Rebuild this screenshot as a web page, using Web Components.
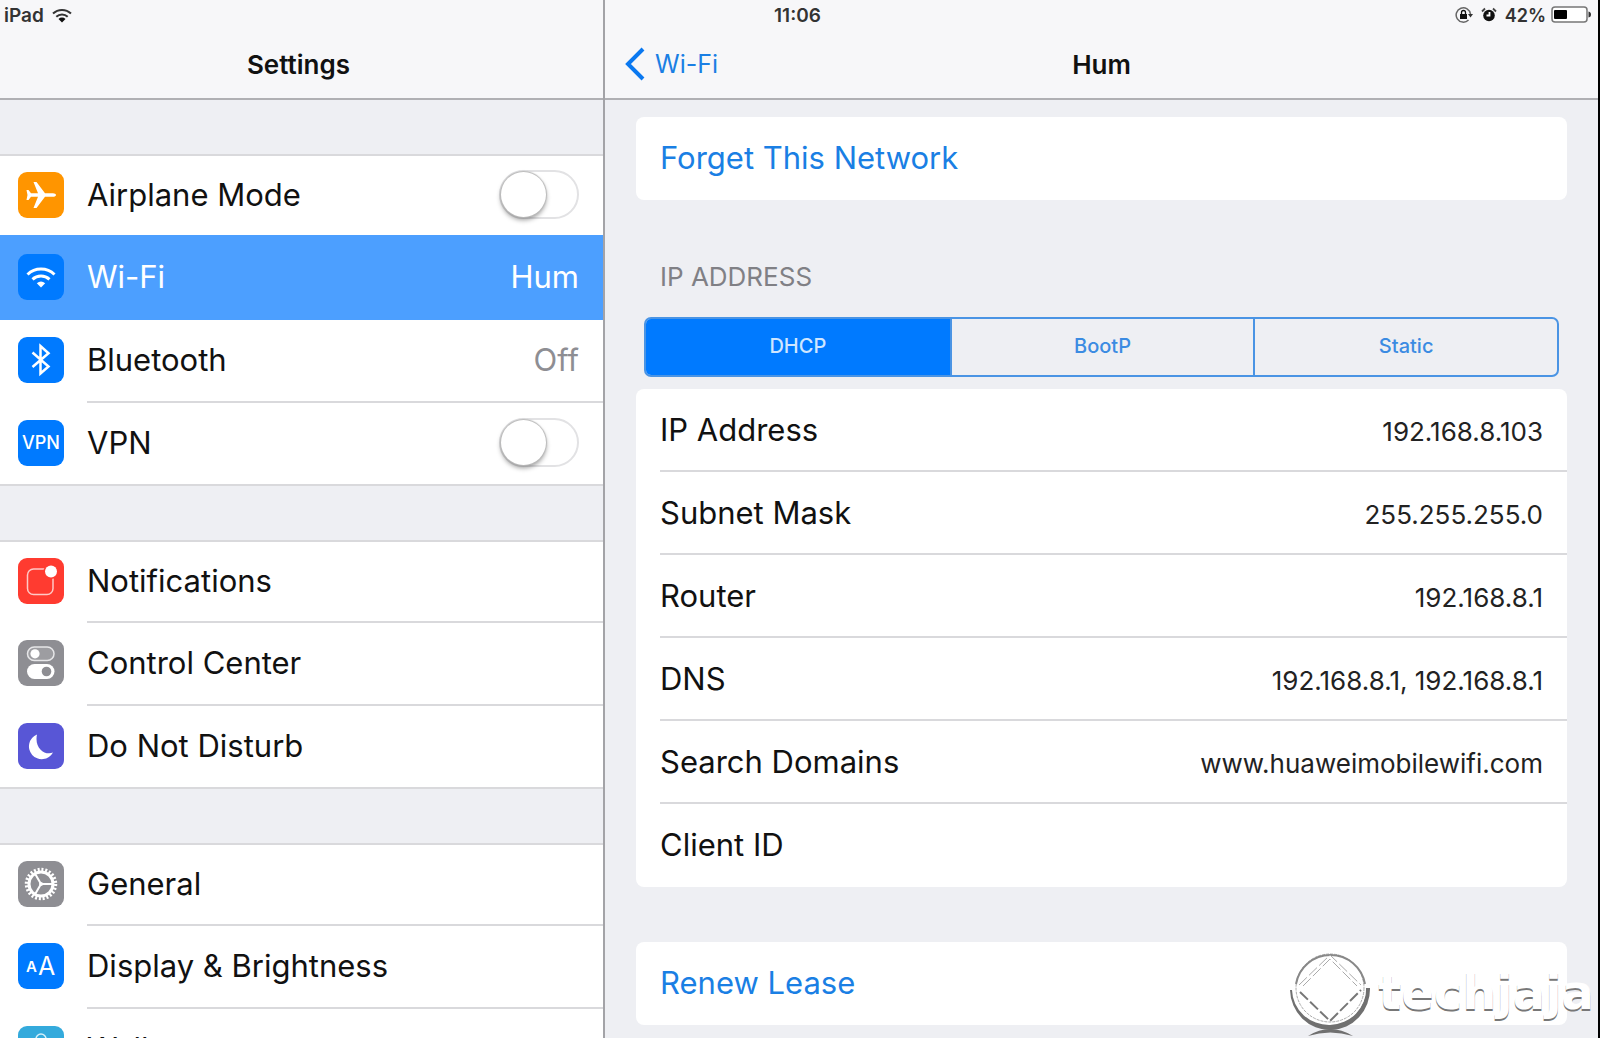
<!DOCTYPE html>
<html lang="en">
<head>
<meta charset="utf-8">
<meta name="viewport" content="width=device-width, initial-scale=1">
<title>Settings</title>
<style>
    body {
        margin: 0;
        font-family: Inter, "Liberation Sans", sans-serif;
        color: #111;
        --pane: #eeeff3;
        --bar: #f7f7f9;
        --edge: #b0b0b4;
        --line: #d9d9dc;
        --blue: #007aff;
        --link: #1a7fe4;
    }
</style>
</head>
<body>
<settings-app></settings-app>

<script>
const makeTemplate = (html) => {
    const template = document.createElement('template');
    template.innerHTML = html;
    return template;
}

const attach = (element, template) => {
    const root = element.attachShadow({ mode: "open" });
    root.appendChild(template.content.cloneNode(true));
    return root;
}

// 46x46 tiles: background colour and the white glyph on it
const tiles = {
    airplane: ['#ff9500', `<path fill="#fff" d="M38 23c0 1-1.500 1.800-3 1.800H27L18.500 36H15.500L20 24.800H13L10.500 28H8.500L9.500 23 8.500 18H10.500L13 21.200H20L15.500 10H18.500L27 21.200H35c1.500 0 3 .8 3 1.800z"/>`],
    wifi: ['#007aff', `<g fill="none" stroke="#fff" stroke-width="3"><path d="M9.500 20.500a19.500 19.500 0 0 1 27 0"/><path d="M14.500 25.300a12.500 12.500 0 0 1 17 0"/></g><path fill="#fff" d="M18.800 29.200a6.500 6.500 0 0 1 8.400 0L23 33.500z"/>`],
    bluetooth: ['#007aff', `<path fill="none" stroke="#fff" stroke-width="2.500" d="M14.500 15.500L30.500 29.500 22.500 36.500V9L30.500 16.200 14.500 30"/>`],
    vpn: ['#007aff', `<text x="23" y="29" font-size="18" font-weight="500" text-anchor="middle" fill="#fff">VPN</text>`],
    notifications: ['#ff3b30', `<rect x="9.500" y="11" width="25.500" height="25.500" rx="6" fill="none" stroke="#ffc9c5" stroke-width="1.500"/><circle cx="33" cy="13.500" r="7.500" fill="#ff3b30"/><circle cx="33" cy="13.500" r="6" fill="#fff"/>`],
    control: ['#8e8e93', `<rect x="9.500" y="7" width="26.500" height="13.500" rx="6.700" fill="#9d9da1" stroke="#e6e6e8" stroke-width="1.500"/><circle cx="17" cy="13.800" r="4.600" fill="#fff"/><rect x="9" y="24" width="27.500" height="15" rx="7.500" fill="#fff"/><circle cx="28.500" cy="31.500" r="4.800" fill="#8e8e93"/>`],
    moon: ['#5856d6', `<path fill="#fff" d="M19 11.500A12.800 12.800 0 1 0 35 29.500C27 33 16 25 19 11.500z"/>`],
    gear: ['#8e8e93', `<g fill="none" stroke="#fff"><circle cx="23" cy="23" r="12" stroke-width="3"/><circle cx="23" cy="23" r="14.500" stroke-width="3.500" stroke-dasharray="2 1.796"/><path stroke-width="2" d="M23 23H34M23 23L17.500 13.500M23 23L17.500 32.500"/></g><circle cx="23" cy="23" r="2" fill="#fff"/>`],
    display: ['#007aff', `<text x="8" y="29" font-size="15" font-weight="600" fill="#fff">A</text><text x="20" y="32" font-size="25" fill="#fff">A</text>`],
    wallpaper: ['#34aadc', `<g fill="none" stroke="#d5f0fa" stroke-width="1.500"><circle cx="23" cy="13" r="5"/><circle cx="13.500" cy="19" r="5"/><circle cx="32.500" cy="19" r="5"/><circle cx="23" cy="33" r="5"/><circle cx="23" cy="23" r="5"/></g>`],
};

class AppIcon extends HTMLElement {
    constructor() {
        super();
        const [color, glyph] = tiles[this.getAttribute('name')];
        attach(this, makeTemplate(`
        <style>
        :host { display: block; flex: none; width: 46px; height: 46px; }
        svg { display: block; font-family: inherit; }
        </style>
        <svg width="46" height="46" viewBox="0 0 46 46" aria-hidden="true">
            <rect width="46" height="46" rx="9" fill="${color}"/>${glyph}
        </svg>`));
    }
}

class SettingsRow extends HTMLElement {
    constructor() {
        super();
        const label = this.getAttribute('label');
        const icon = this.getAttribute('icon');
        const value = this.getAttribute('value') || '';
        const inner = `<span class="name">${label}</span>`;
        const row = this.hasAttribute('switch')
            ? `<label class="row"><app-icon name="${icon}"></app-icon><span class="body">${inner}<input type="checkbox" role="switch"></span></label>`
            : `<a class="row" href="#${icon}"><app-icon name="${icon}"></app-icon><span class="body">${inner}<span class="value">${value}</span></span></a>`;
        attach(this, makeTemplate(`
        <style>
        :host { display: block; height: 83px; }
        :host(:first-child) { height: 81px; }
        .row {
            display: flex;
            height: 100%;
            gap: 23px;
            padding-left: 18px;
            align-items: center;
            color: inherit;
            text-decoration: none;
            font-size: 31px;
            box-sizing: border-box;
        }
        app-icon { margin-bottom: 4px; }
        .body {
            flex: 1;
            display: flex;
            height: 100%;
            align-items: center;
            justify-content: space-between;
            padding: 0 24px 2px 0;
            border-bottom: 2px solid var(--line);
            box-sizing: border-box;
        }
        :host(:last-child) .body { border-color: transparent; }
        .value { color: #8e8e93; }
        :host([selected]) {
            position: relative;
            background: #4c9fff;
            color: #fff;
            box-shadow: 0 -2px #4c9fff;
        }
        :host([selected]) .body { border-color: transparent; }
        :host([selected]) .value { color: #fff; }
        input {
            appearance: none;
            margin: 0;
            width: 80px;
            height: 49px;
            border: 2px solid #e2e2e4;
            border-radius: 25px;
            background: #fff;
        }
        input::before {
            content: "";
            display: block;
            width: 45px;
            height: 45px;
            border-radius: 50%;
            background: #fff;
            box-shadow: 0 0 1px 1px #bbb, 0 3px 5px rgba(0, 0, 0, .4);
        }
        input:checked { background: #4cd964; }
        input:checked::before { margin-left: auto; }
        </style>
        ${row}`));
    }
}

const listTemplate = makeTemplate(`
<style>
:host {
    display: block;
    margin-top: 54px;
    background: #fff;
    border-top: 2px solid var(--line);
    box-shadow: inset 0 -2px var(--line);
}
</style>
<slot></slot>`);

class SettingsList extends HTMLElement {
    constructor() {
        super();
        attach(this, listTemplate);
    }
}

const navTemplate = makeTemplate(`
<style>
:host {
    display: grid;
    grid-template-columns: 1fr auto 1fr;
    align-items: center;
    flex: none;
    height: 100px;
    padding: 30px 20px 0;
    background: var(--bar);
    border-bottom: 2px solid var(--edge);
    box-sizing: border-box;
    font-size: 25px;
}
h1 { grid-column: 2; margin: 0; font-size: 26px; font-weight: 600; }
::slotted(a) {
    grid-row: 1;
    display: flex;
    align-items: center;
    gap: 10px;
    color: var(--link);
    text-decoration: none;
}
</style>
<slot name="back"></slot>
<h1><slot></slot></h1>`);

class NavBar extends HTMLElement {
    constructor() {
        super();
        attach(this, navTemplate);
    }
}

const statusTemplate = makeTemplate(`
<style>
:host {
    display: grid;
    grid-template-columns: 1fr auto 1fr;
    align-items: center;
    height: 30px;
    padding: 0 7px 0 4px;
    font-size: 19px;
    font-weight: 600;
    color: #333;
}
div { display: flex; align-items: center; gap: 8px; }
.right { justify-content: flex-end; font-size: 18px; }
.power { gap: 5px; }
svg { display: block; }
</style>
<div>
    <span>iPad</span>
    <svg width="20" height="15" viewBox="0 0 20 15" fill="none" stroke="#333" stroke-width="2">
        <path d="M1 5.500a13 13 0 0 1 18 0M4.300 8.800a8.200 8.200 0 0 1 11.400 0"/>
        <path fill="#111" stroke="none" d="M6.500 11a5 5 0 0 1 7 0L10 14.500z"/>
    </svg>
</div>
<time>11:06</time>
<div class="right">
    <svg width="18" height="18" viewBox="0 0 18 18">
        <path fill="none" stroke="#666" stroke-width="1.500" d="M15.500 8A7.200 7.200 0 1 0 13.500 14"/>
        <path fill="#333" d="M13 8H18L15.500 11.500z"/>
        <rect x="5" y="8" width="7" height="5" fill="#111"/>
        <path fill="none" stroke="#111" stroke-width="1.300" d="M6.500 8V6.500a2 2 0 0 1 4 0V8"/>
    </svg>
    <svg width="16" height="16" viewBox="0 0 16 16">
        <circle cx="8" cy="8.500" r="5.800" fill="#111"/>
        <path stroke="#fff" stroke-width="1.800" fill="none" d="M8.500 5V8.500H5.500"/>
        <path stroke="#444" stroke-width="1.800" fill="none" d="M1 4.500L4 1.500M15 4.500L12 1.500"/>
    </svg>
    <div class="power">
        <span>42%</span>
        <svg width="40" height="18" viewBox="0 0 40 18">
            <rect x="1" y="1" width="35" height="15" rx="3" fill="#fff" stroke="#777" stroke-width="1.500"/>
            <rect x="3" y="4" width="13" height="9" rx="1" fill="#000"/>
            <path fill="#333" d="M37.500 5.500c2 .5 2.500 1.500 2.500 3s-.5 2.500-2.500 3z"/>
        </svg>
    </div>
</div>`);

class StatusBar extends HTMLElement {
    constructor() {
        super();
        attach(this, statusTemplate);
    }
}

const cardTemplate = makeTemplate(`
<style>
:host { display: block; background: #fff; border-radius: 8px; }
::slotted(button) {
    display: block;
    width: 100%;
    height: 83px;
    padding: 0 24px 2px;
    border: 0;
    background: none;
    font: inherit;
    font-size: 31px;
    text-align: left;
    color: var(--link);
}
</style>
<slot></slot>`);

class SettingsCard extends HTMLElement {
    constructor() {
        super();
        attach(this, cardTemplate);
    }
}

const segmentTemplate = makeTemplate(`
<style>
:host {
    display: grid;
    grid-auto-flow: column;
    grid-auto-columns: 1fr;
    height: 60px;
    margin: 0 8px;
    border: 2px solid #4a94e4;
    border-radius: 7px;
    overflow: hidden;
    box-sizing: border-box;
}
::slotted(button) {
    border: 0;
    padding: 0 0 2px;
    background: none;
    font: inherit;
    font-size: 20px;
    font-weight: 500;
    color: #3b8be2;
}
::slotted(button:not(:first-child)) { border-left: 2px solid #4a94e4; }
::slotted(button[aria-pressed="true"]) {
    background: var(--blue);
    color: #cfe6ff;
}
</style>
<slot></slot>`);

class SegmentedControl extends HTMLElement {
    constructor() {
        super();
        attach(this, segmentTemplate);
        this.addEventListener('click', (e) => {
            const picked = e.target.closest('button');
            if (!picked) return;
            this.querySelectorAll('button').forEach(b => b.setAttribute('aria-pressed', b === picked));
        });
    }
}

const details = [
    ['IP Address', '192.168.8.103'],
    ['Subnet Mask', '255.255.255.0'],
    ['Router', '192.168.8.1'],
    ['DNS', '192.168.8.1, 192.168.8.1'],
    ['Search Domains', 'www.huaweimobilewifi.com'],
    ['Client ID', ''],
];

class NetworkDetails extends HTMLElement {
    constructor() {
        super();
        attach(this, makeTemplate(`
        <style>
        :host { display: block; padding-left: 24px; }
        dl { margin: 0; }
        div {
            display: flex;
            align-items: baseline;
            justify-content: space-between;
            height: 83px;
            padding: 21px 24px 0 0;
            border-bottom: 2px solid var(--line);
            box-sizing: border-box;
            line-height: 40px;
        }
        div:last-child { border-color: transparent; }
        dt { font-size: 31px; }
        dd { margin: 0; font-size: 26px; color: #222; }
        </style>
        <dl>${details.map(([name, value]) => `<div><dt>${name}</dt><dd>${value}</dd></div>`).join('')}</dl>`));
    }
}

const markTemplate = makeTemplate(`
<style>
:host {
    position: absolute;
    right: 4px;
    bottom: 0;
    display: flex;
    gap: 6px;
    pointer-events: none;
    color: #fff;
    font-family: "DejaVu Sans", sans-serif;
    font-size: 48px;
    font-weight: 700;
    line-height: 60px;
    text-shadow: 0 2px #777;
}
svg { display: block; }
span { padding-top: 10px; }
</style>
<svg width="84" height="86" viewBox="0 0 84 86" fill="none">
    <path fill="#707070" d="M2 38A40 41 0 0 0 82 36L78 36A36 35 0 0 1 4 38z"/>
    <path fill="#707070" d="M20 84Q42 70 65 84Q42 77 20 84z"/>
    <circle cx="42" cy="36" r="36" fill="#fff"/>
    <circle cx="42" cy="36" r="34" stroke="#aaa" stroke-dasharray="3 1"/>
    <path stroke="#888" stroke-width="2" d="M8 32A35 35 0 0 1 77 32"/>
    <path stroke="#777" stroke-width="2" stroke-dasharray="11 3" d="M12 40L42 69 73 38"/>
    <path stroke="#aaa" stroke-dasharray="11 3" d="M11 33L42 3 73 33M15 34L42 7 69 34"/>
</svg>
<span>techjaja</span>`);

class SiteMark extends HTMLElement {
    constructor() {
        super();
        attach(this, markTemplate);
    }
}

const appTemplate = makeTemplate(`
<style>
:host {
    position: relative;
    display: grid;
    grid-template: 30px 1fr / 605fr 993fr;
    height: 100vh;
    overflow: hidden;
    border-right: 2px solid #000;
    background: var(--pane);
    box-sizing: border-box;
}
status-bar { grid-area: 1 / 1 / 2 / 3; z-index: 1; }
aside, main {
    grid-row: 1 / 3;
    display: flex;
    flex-direction: column;
    min-width: 0;
    min-height: 0;
}
aside { grid-column: 1; border-right: 2px solid #a3a3a7; }
aside nav-bar { padding-right: 26px; }
main { grid-column: 2; }
.scroll { flex: 1; min-height: 0; overflow: auto; scrollbar-width: none; }
main .scroll { padding: 17px 31px 0; }
h2 {
    margin: 0;
    padding: 61px 24px 24px;
    font-size: 26px;
    font-weight: 400;
    line-height: 32px;
    color: #808085;
}
.details { margin: 12px 0 55px; }
</style>
<status-bar></status-bar>
<aside>
    <nav-bar>Settings</nav-bar>
    <div class="scroll">
        <settings-list>
            <settings-row icon="airplane" label="Airplane Mode" switch></settings-row>
            <settings-row icon="wifi" label="Wi-Fi" value="Hum" selected></settings-row>
            <settings-row icon="bluetooth" label="Bluetooth" value="Off"></settings-row>
            <settings-row icon="vpn" label="VPN" switch></settings-row>
        </settings-list>
        <settings-list>
            <settings-row icon="notifications" label="Notifications"></settings-row>
            <settings-row icon="control" label="Control Center"></settings-row>
            <settings-row icon="moon" label="Do Not Disturb"></settings-row>
        </settings-list>
        <settings-list>
            <settings-row icon="gear" label="General"></settings-row>
            <settings-row icon="display" label="Display &amp; Brightness"></settings-row>
            <settings-row icon="wallpaper" label="Wallpaper"></settings-row>
        </settings-list>
    </div>
</aside>
<main>
    <nav-bar>
        <a slot="back" href="#wifi">
            <svg width="20" height="34" viewBox="0 0 20 34" fill="none" stroke="#0a78f0" stroke-width="4"><path d="M18 2L3 17 18 32"/></svg>
            Wi-Fi
        </a>
        Hum
    </nav-bar>
    <div class="scroll">
        <settings-card><button type="button">Forget This Network</button></settings-card>
        <h2>IP ADDRESS</h2>
        <segmented-control role="group" aria-label="IP address mode">
            <button type="button" aria-pressed="true">DHCP</button>
            <button type="button" aria-pressed="false">BootP</button>
            <button type="button" aria-pressed="false">Static</button>
        </segmented-control>
        <settings-card class="details"><network-details></network-details></settings-card>
        <settings-card><button type="button">Renew Lease</button></settings-card>
    </div>
</main>
<site-mark></site-mark>`);

class SettingsApp extends HTMLElement {
    constructor() {
        super();
        attach(this, appTemplate);
    }
}

// cloned template nodes are upgraded on insertion, so attributes are there in each constructor
window.customElements.define('app-icon', AppIcon);
window.customElements.define('settings-row', SettingsRow);
window.customElements.define('settings-list', SettingsList);
window.customElements.define('nav-bar', NavBar);
window.customElements.define('status-bar', StatusBar);
window.customElements.define('settings-card', SettingsCard);
window.customElements.define('segmented-control', SegmentedControl);
window.customElements.define('network-details', NetworkDetails);
window.customElements.define('site-mark', SiteMark);
window.customElements.define('settings-app', SettingsApp);
</script>
</body>
</html>
